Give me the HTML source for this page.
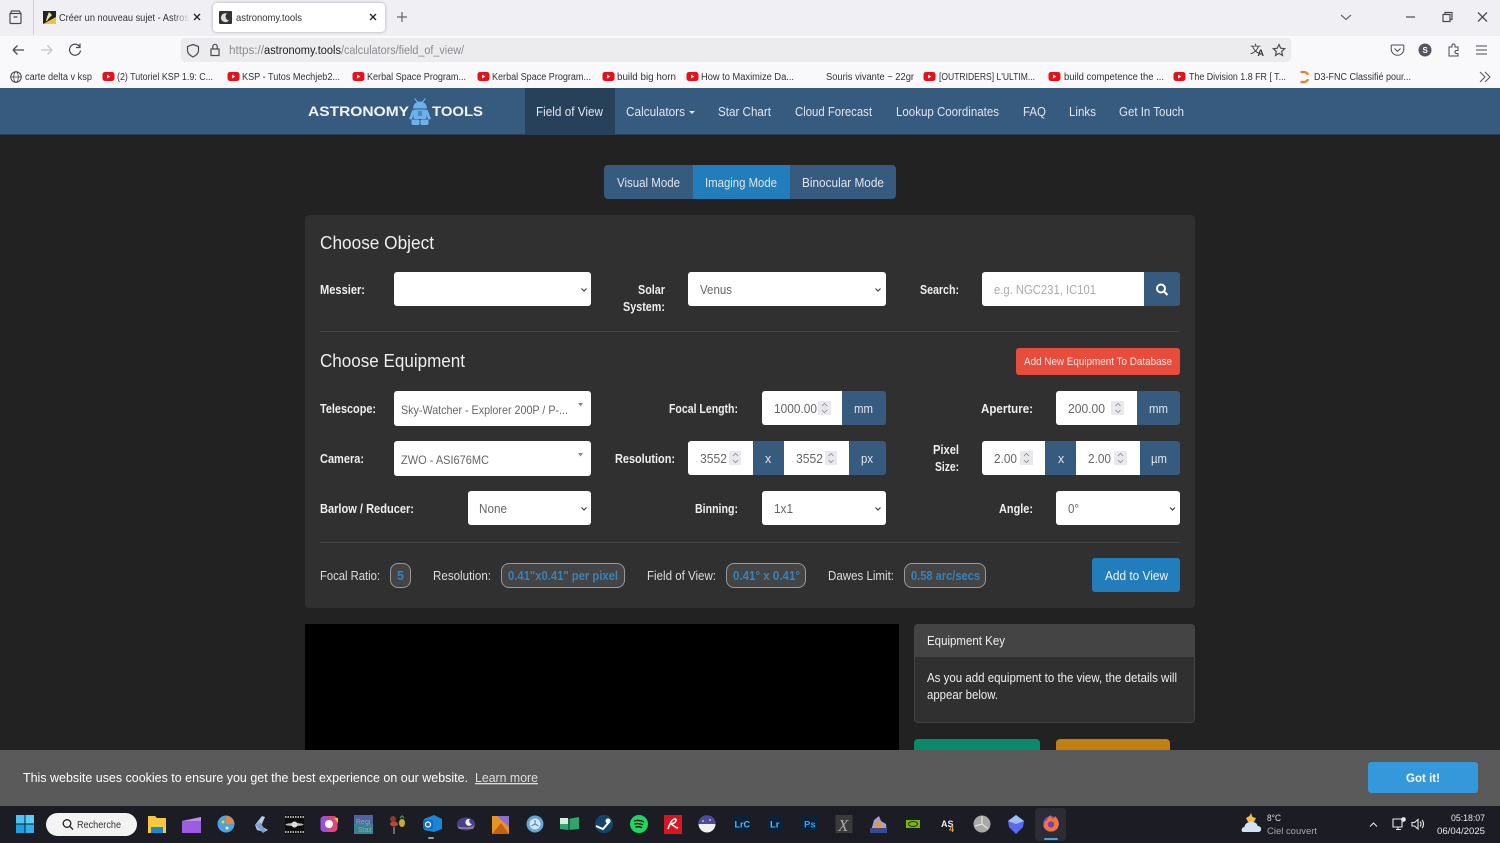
<!DOCTYPE html>
<html lang="fr"><head><meta charset="utf-8"><title>astronomy.tools</title>
<style>
html,body{margin:0;padding:0;width:1500px;height:843px;overflow:hidden;background:#222}
.b{position:absolute;box-sizing:border-box}
svg{position:absolute;left:0;top:0}
text{font-family:"Liberation Sans",sans-serif;white-space:pre}
.c text{fill:#333;font-size:10px}
.n text{fill:#dfe6ee;font-size:13px}
.l text{fill:#eee;font-size:12.5px;font-weight:700}
.r text{fill:#ddd;font-size:12.5px}
.w text{fill:#666;font-size:12.5px}
.e text{fill:#eee;font-size:12.5px}
.v text{fill:#3682bd;font-size:12.5px;font-weight:700}
</style></head><body>
<!-- browser chrome -->
<div class="b" style="left:0;top:0;width:1500px;height:36px;background:#f0f0f4"></div>
<div class="b" style="left:33px;top:0;width:1px;height:35px;background:#d0d0d4"></div>
<div class="b" style="left:213px;top:3px;width:172px;height:29px;background:#fff;border-radius:4px;box-shadow:0 0 3px rgba(0,0,0,.3)"></div>
<div class="b" style="left:0;top:36px;width:1500px;height:52px;background:#f9f9fb"></div>
<div class="b" style="left:181px;top:38px;width:1110px;height:24px;background:#ececee;border-radius:4px"></div>
<!-- nav -->
<div class="b" style="left:0;top:88px;width:1500px;height:47px;background:#375a7f;border-bottom:1px solid #2a3f55"></div>
<div class="b" style="left:525px;top:88px;width:90px;height:47px;background:#28415b"></div>
<!-- mode buttons -->
<div class="b" style="left:604px;top:165px;width:292px;height:34px;background:#375a7f;border-radius:4px"></div>
<div class="b" style="left:693px;top:165px;width:97px;height:34px;background:#217dbb"></div>
<!-- main card -->
<div class="b" style="left:305px;top:215px;width:890px;height:393px;background:#303030;border-radius:4px"></div>
<div class="b" style="left:320px;top:331px;width:860px;height:1px;background:#444"></div>
<div class="b" style="left:320px;top:542px;width:860px;height:1px;background:#444"></div>
<!-- controls -->
<div class="b" style="left:394px;top:272px;width:197px;height:34px;background:#fff;border-radius:3px"></div>
<div class="b" style="left:688px;top:272px;width:198px;height:34px;background:#fff;border-radius:3px"></div>
<div class="b" style="left:982px;top:272px;width:198px;height:34px;background:#375a7f;border-radius:3px"></div>
<div class="b" style="left:982px;top:272px;width:162px;height:34px;background:#fff;border-radius:3px 0 0 3px"></div>
<div class="b" style="left:1016px;top:348px;width:164px;height:27px;background:#e74c3c;border-radius:3px"></div>
<div class="b" style="left:394px;top:391px;width:197px;height:35px;background:#fff;border-radius:3px"></div>
<div class="b" style="left:762px;top:391px;width:124px;height:34px;background:#375a7f;border-radius:3px"></div>
<div class="b" style="left:762px;top:391px;width:80px;height:34px;background:#fff;border-radius:3px 0 0 3px"></div>
<div class="b" style="left:1056px;top:391px;width:124px;height:34px;background:#375a7f;border-radius:3px"></div>
<div class="b" style="left:1056px;top:391px;width:81px;height:34px;background:#fff;border-radius:3px 0 0 3px"></div>
<div class="b" style="left:394px;top:441px;width:197px;height:35px;background:#fff;border-radius:3px"></div>
<div class="b" style="left:688px;top:441px;width:198px;height:34px;background:#375a7f;border-radius:3px"></div>
<div class="b" style="left:688px;top:441px;width:65px;height:34px;background:#fff;border-radius:3px 0 0 3px"></div>
<div class="b" style="left:784px;top:441px;width:65px;height:34px;background:#fff"></div>
<div class="b" style="left:982px;top:441px;width:198px;height:34px;background:#375a7f;border-radius:3px"></div>
<div class="b" style="left:982px;top:441px;width:63px;height:34px;background:#fff;border-radius:3px 0 0 3px"></div>
<div class="b" style="left:1076px;top:441px;width:64px;height:34px;background:#fff"></div>
<div class="b" style="left:468px;top:491px;width:123px;height:34px;background:#fff;border-radius:3px"></div>
<div class="b" style="left:762px;top:491px;width:124px;height:34px;background:#fff;border-radius:3px"></div>
<div class="b" style="left:1056px;top:491px;width:124px;height:34px;background:#fff;border-radius:3px"></div>
<!-- spinners -->
<div class="b" style="left:818px;top:401px;width:13px;height:14px;background:#e9e9ed"></div>
<div class="b" style="left:1111px;top:401px;width:13px;height:14px;background:#e9e9ed"></div>
<div class="b" style="left:729px;top:451px;width:12px;height:14px;background:#e9e9ed"></div>
<div class="b" style="left:825px;top:451px;width:12px;height:14px;background:#e9e9ed"></div>
<div class="b" style="left:1020px;top:451px;width:13px;height:14px;background:#e9e9ed"></div>
<div class="b" style="left:1114px;top:451px;width:13px;height:14px;background:#e9e9ed"></div>
<!-- badges -->
<div class="b" style="left:390px;top:563px;width:21px;height:25px;background:#444;border:1px solid #999;border-radius:8px"></div>
<div class="b" style="left:501px;top:563px;width:124px;height:25px;background:#444;border:1px solid #999;border-radius:8px"></div>
<div class="b" style="left:726px;top:563px;width:80px;height:25px;background:#444;border:1px solid #999;border-radius:8px"></div>
<div class="b" style="left:904px;top:563px;width:82px;height:25px;background:#444;border:1px solid #999;border-radius:8px"></div>
<div class="b" style="left:1092px;top:558px;width:88px;height:34px;background:#217dbb;border-radius:3px"></div>
<!-- lower area -->
<div class="b" style="left:305px;top:624px;width:594px;height:126px;background:#000"></div>
<div class="b" style="left:914px;top:624px;width:281px;height:99px;background:#303030;border:1px solid #444;border-radius:4px"></div>
<div class="b" style="left:914px;top:624px;width:281px;height:33px;background:#444;border-radius:4px 4px 0 0"></div>
<div class="b" style="left:914px;top:739px;width:126px;height:20px;background:#0b8a6a;border-radius:4px"></div>
<div class="b" style="left:1056px;top:739px;width:114px;height:20px;background:#c27f12;border-radius:4px"></div>
<!-- cookie bar -->
<div class="b" style="left:0;top:750px;width:1500px;height:56px;background:#5a5a5a"></div>
<div class="b" style="left:1368px;top:762px;width:110px;height:31px;background:#3498db;border-radius:3px"></div>
<!-- taskbar -->
<div class="b" style="left:0;top:806px;width:1500px;height:37px;background:#1c1d24"></div>
<div class="b" style="left:46px;top:813px;width:91px;height:23px;background:#f3f3f3;border-radius:12px"></div>
<div class="b" style="left:1035px;top:808px;width:31px;height:33px;background:#2c2d34;border-radius:4px"></div>
<div class="b" style="left:1044px;top:838px;width:14px;height:2px;background:#4aa3e0;border-radius:1px"></div>
<div class="b" style="left:428px;top:837px;width:6px;height:2px;background:#999;border-radius:1px"></div>

<svg width="1500" height="843" viewBox="0 0 1500 843">
<!-- chrome text -->
<g class="c">
<text x="59" y="21" textLength="130" lengthAdjust="spacingAndGlyphs" style="font-size:10.5px">Créer un nouveau sujet - Astros</text>
<text x="236" y="21" textLength="66" lengthAdjust="spacingAndGlyphs" style="font-size:10.5px">astronomy.tools</text>
<text x="229" y="54" textLength="35" lengthAdjust="spacingAndGlyphs" style="font-size:11.5px;fill:#8a8a90">https://</text>
<text x="264" y="54" textLength="77" lengthAdjust="spacingAndGlyphs" style="font-size:11.5px;fill:#222">astronomy.tools</text>
<text x="341" y="54" textLength="123" lengthAdjust="spacingAndGlyphs" style="font-size:11.5px;fill:#8a8a90">/calculators/field_of_view/</text>
<text x="25" y="80" textLength="67" lengthAdjust="spacingAndGlyphs">carte delta v ksp</text>
<text x="117" y="80" textLength="96" lengthAdjust="spacingAndGlyphs">(2) Tutoriel KSP 1.9: C...</text>
<text x="242" y="80" textLength="98" lengthAdjust="spacingAndGlyphs">KSP - Tutos Mechjeb2...</text>
<text x="367" y="80" textLength="99" lengthAdjust="spacingAndGlyphs">Kerbal Space Program...</text>
<text x="492" y="80" textLength="99" lengthAdjust="spacingAndGlyphs">Kerbal Space Program...</text>
<text x="617" y="80" textLength="59" lengthAdjust="spacingAndGlyphs">build big horn</text>
<text x="701" y="80" textLength="93" lengthAdjust="spacingAndGlyphs">How to Maximize Da...</text>
<text x="826" y="80" textLength="88" lengthAdjust="spacingAndGlyphs">Souris vivante ~ 22gr</text>
<text x="939" y="80" textLength="96" lengthAdjust="spacingAndGlyphs">[OUTRIDERS] L'ULTIM...</text>
<text x="1064" y="80" textLength="100" lengthAdjust="spacingAndGlyphs">build competence the ...</text>
<text x="1189" y="80" textLength="97" lengthAdjust="spacingAndGlyphs">The Division 1.8 FR [ T...</text>
<text x="1314" y="80" textLength="97" lengthAdjust="spacingAndGlyphs">D3-FNC Classifié pour...</text>
</g>
<!-- tab fade -->
<defs><linearGradient id="fd"><stop offset="0" stop-color="#f0f0f4" stop-opacity="0"/><stop offset="1" stop-color="#f0f0f4"/></linearGradient></defs>
<rect x="172" y="10" width="18" height="15" fill="url(#fd)"/>
<!-- chrome icons -->
<g fill="none" stroke="#4a4a50" stroke-width="1.2">
<path d="M10 13.500h11v9a1 1 0 0 1-1 1h-9a1 1 0 0 1-1-1zM10.500 13.500l1-2.500h8l1 2.500M13.500 17h4"/>
<path d="M194 14l6 6M200 14l-6 6" stroke="#222" stroke-width="1.300"/>
<path d="M370 14l6 6M376 14l-6 6" stroke="#222" stroke-width="1.300"/>
<path d="M402 12v10M397 17h10" stroke="#666"/>
<path d="M1341 15l5 4.500 5-4.500" stroke="#666"/>
<path d="M1406 17h9"/>
<path d="M1443 14.500h7v7h-7zM1445 14.500v-2h7v7h-2" />
<path d="M1478 12.500l9 9M1487 12.500l-9 9" stroke-width="1.300"/>
<path d="M24 50H13M13 50l4.500-4.500M13 50l4.500 4.500" stroke-width="1.300"/>
<path d="M52 50H41M52 50l-4.500-4.500M52 50l-4.500 4.500" stroke="#c4c4c8" stroke-width="1.300"/>
<path d="M79.500 46.500a5.500 5.500 0 1 0 1 4M80 43.500v4h-4" stroke-width="1.200"/>
<path d="M193 44.500l5.500 2v4c0 3-2.500 5-5.500 6.500-3-1.500-5.500-3.500-5.500-6.500v-4z"/>
<path d="M211 49h8v6.500h-8zM212.800 49v-2.500a2.200 2.200 0 0 1 4.400 0V49" stroke-width="1.200"/>
<path d="M1279 44.500l1.700 3.700 4 .5-3 2.700.8 4-3.500-2-3.500 2 .8-4-3-2.700 4-.5z"/>
<path d="M1392 45h11a.8.800 0 0 1 .8.800v3.200a6.200 6.200 0 0 1-12.600 0v-3.200a.8.800 0 0 1 .8-.8zM1394.500 48.500l3 2.800 3-2.800" stroke-width="1"/>
<path d="M1449 47h3v-1.500a1.500 1.500 0 0 1 3 0V47h3v3.500h-1.500a1.500 1.500 0 0 0 0 3H1458V56h-9z" stroke-width="1"/>
<path d="M1476 46h11M1476 50h11M1476 54h11" stroke-width="1"/>
<path d="M1480 72l5 5-5 5M1485 72l5 5-5 5" stroke="#555" stroke-width="1"/>
</g>
<text x="1250" y="53" style="font-size:11px;fill:#333;font-family:'Noto Sans CJK SC',sans-serif">文</text>
<text x="1257.500" y="56" style="font-size:9px;fill:#333;font-weight:700">A</text>
<circle cx="1425" cy="50" r="6.500" fill="#55555f"/><text x="1422.500" y="53" style="font-size:8px;fill:#fff;font-weight:700">S</text>
<!-- favicons -->
<rect x="43" y="11" width="13" height="13" fill="#222"/><path d="M43 24l13-7v7z" fill="#e4c64a"/><path d="M49 12l3 3-3 3-2 3h-1l1-4z" fill="#f0e6a0"/>
<rect x="219" y="11" width="13" height="13" rx="1" fill="#333"/><path d="M227 13.500a4.500 4.500 0 1 0 2 7 4 4 0 0 1-2-7z" fill="#ddd"/>
<circle cx="16" cy="77" r="5.300" fill="none" stroke="#444"/><ellipse cx="16" cy="77" rx="2.300" ry="5.300" fill="none" stroke="#444" stroke-width=".8"/><path d="M10.700 77h10.600" stroke="#444" stroke-width=".8"/>
<g id="yt"><rect x="102.500" y="72" width="12" height="9" rx="2.500" fill="#e8101a"/><path d="M107 74.500l3.200 2-3.200 2z" fill="#fff"/></g>
<use href="#yt" x="125"/><use href="#yt" x="250"/><use href="#yt" x="375"/><use href="#yt" x="500"/><use href="#yt" x="584"/><use href="#yt" x="821"/><use href="#yt" x="946"/><use href="#yt" x="1071"/>
<path d="M1300.500 72h3c2.500 0 4 1 4.500 3M1300.500 82h3c2.500 0 4-1 4.500-3" fill="none" stroke="#e8812a" stroke-width="2.200"/>
<!-- nav -->
<g class="n">
<text x="536" y="116" textLength="67" lengthAdjust="spacingAndGlyphs">Field of View</text>
<text x="626" y="116" textLength="59" lengthAdjust="spacingAndGlyphs">Calculators</text>
<text x="718" y="116" textLength="53" lengthAdjust="spacingAndGlyphs">Star Chart</text>
<text x="795" y="116" textLength="77" lengthAdjust="spacingAndGlyphs">Cloud Forecast</text>
<text x="896" y="116" textLength="103" lengthAdjust="spacingAndGlyphs">Lookup Coordinates</text>
<text x="1023" y="116" textLength="23" lengthAdjust="spacingAndGlyphs">FAQ</text>
<text x="1069" y="116" textLength="27" lengthAdjust="spacingAndGlyphs">Links</text>
<text x="1119" y="116" textLength="65" lengthAdjust="spacingAndGlyphs">Get In Touch</text>
</g>
<path d="M689 111h6l-3 3z" fill="#dfe6ee"/>
<text x="308" y="116" textLength="101" lengthAdjust="spacingAndGlyphs" style="font-size:13.500px;font-weight:700;fill:#f2f5f8">ASTRONOMY</text>
<text x="432" y="116" textLength="51" lengthAdjust="spacingAndGlyphs" style="font-size:13.500px;font-weight:700;fill:#f2f5f8">TOOLS</text>
<!-- robot logo -->
<g fill="#6cb1ea">
<path d="M414.500 98.500l3.500 4M425.500 98.500l-3.500 4" stroke="#6cb1ea" stroke-width="1.200" fill="none"/>
<path d="M413 108.500c0-4 3-7 7-7s7 3 7 7z"/>
<rect x="413.500" y="109.500" width="13" height="9.500" rx="1"/>
<path d="M412.500 109.500l-3.500 9.500 2.800.8 2.700-7.800zM427.500 109.500l3.500 9.500-2.800.8-2.700-7.800z"/>
<rect x="411.500" y="119.500" width="8" height="5.500" rx="1.500"/><rect x="420.500" y="119.500" width="8" height="5.500" rx="1.500"/>
</g>
<rect x="418" y="111" width="4" height="5" fill="#4d89bf"/>
<!-- mode text -->
<g class="n">
<text x="617" y="187" textLength="63" lengthAdjust="spacingAndGlyphs">Visual Mode</text>
<text x="705" y="187" textLength="72" lengthAdjust="spacingAndGlyphs">Imaging Mode</text>
<text x="802" y="187" textLength="82" lengthAdjust="spacingAndGlyphs">Binocular Mode</text>
</g>
<!-- headings -->
<text x="320" y="249" textLength="114" lengthAdjust="spacingAndGlyphs" style="font-size:18px;fill:#eee">Choose Object</text>
<text x="320" y="367" textLength="145" lengthAdjust="spacingAndGlyphs" style="font-size:18px;fill:#eee">Choose Equipment</text>
<!-- labels -->
<g class="l">
<text x="320" y="294" textLength="45" lengthAdjust="spacingAndGlyphs">Messier:</text>
<text x="638" y="294" textLength="27" lengthAdjust="spacingAndGlyphs">Solar</text>
<text x="623" y="311" textLength="42" lengthAdjust="spacingAndGlyphs">System:</text>
<text x="920" y="294" textLength="39" lengthAdjust="spacingAndGlyphs">Search:</text>
<text x="320" y="413" textLength="56" lengthAdjust="spacingAndGlyphs">Telescope:</text>
<text x="669" y="413" textLength="69" lengthAdjust="spacingAndGlyphs">Focal Length:</text>
<text x="981" y="413" textLength="52" lengthAdjust="spacingAndGlyphs">Aperture:</text>
<text x="320" y="463" textLength="44" lengthAdjust="spacingAndGlyphs">Camera:</text>
<text x="615" y="463" textLength="60" lengthAdjust="spacingAndGlyphs">Resolution:</text>
<text x="933" y="454" textLength="26" lengthAdjust="spacingAndGlyphs">Pixel</text>
<text x="935" y="471" textLength="24" lengthAdjust="spacingAndGlyphs">Size:</text>
<text x="320" y="513" textLength="94" lengthAdjust="spacingAndGlyphs">Barlow / Reducer:</text>
<text x="695" y="513" textLength="43" lengthAdjust="spacingAndGlyphs">Binning:</text>
<text x="999" y="513" textLength="34" lengthAdjust="spacingAndGlyphs">Angle:</text>
</g>
<!-- values -->
<g class="w">
<text x="700" y="294" textLength="32" lengthAdjust="spacingAndGlyphs">Venus</text>
<text x="994" y="294" textLength="102" lengthAdjust="spacingAndGlyphs" style="fill:#aaa">e.g. NGC231, IC101</text>
<text x="401" y="414" textLength="167" lengthAdjust="spacingAndGlyphs" style="font-size:12px">Sky-Watcher - Explorer 200P / P-...</text>
<text x="774" y="413" textLength="43" lengthAdjust="spacingAndGlyphs">1000.00</text>
<text x="1068" y="413" textLength="37" lengthAdjust="spacingAndGlyphs">200.00</text>
<text x="401" y="464" textLength="88" lengthAdjust="spacingAndGlyphs" style="font-size:12px">ZWO - ASI676MC</text>
<text x="700" y="463" textLength="27" lengthAdjust="spacingAndGlyphs">3552</text>
<text x="796" y="463" textLength="27" lengthAdjust="spacingAndGlyphs">3552</text>
<text x="994" y="463" textLength="23" lengthAdjust="spacingAndGlyphs">2.00</text>
<text x="1088" y="463" textLength="23" lengthAdjust="spacingAndGlyphs">2.00</text>
<text x="479" y="513" textLength="28" lengthAdjust="spacingAndGlyphs">None</text>
<text x="774" y="513" textLength="19" lengthAdjust="spacingAndGlyphs">1x1</text>
<text x="1068" y="513" textLength="11" lengthAdjust="spacingAndGlyphs">0°</text>
</g>
<g class="n" >
<text x="854" y="413" textLength="19" lengthAdjust="spacingAndGlyphs" style="font-size:12.500px">mm</text>
<text x="1149" y="413" textLength="19" lengthAdjust="spacingAndGlyphs" style="font-size:12.500px">mm</text>
<text x="765" y="463" style="font-size:12.500px">x</text>
<text x="861" y="463" textLength="12" lengthAdjust="spacingAndGlyphs" style="font-size:12.500px">px</text>
<text x="1058" y="463" style="font-size:12.500px">x</text>
<text x="1151" y="463" textLength="16" lengthAdjust="spacingAndGlyphs" style="font-size:12.500px">µm</text>
<text x="1024" y="365" textLength="148" lengthAdjust="spacingAndGlyphs" style="font-size:11px;fill:#fbe6e4">Add New Equipment To Database</text>
<text x="1105" y="580" textLength="63" lengthAdjust="spacingAndGlyphs" style="font-size:12.500px;fill:#f0f4f8">Add to View</text>
</g>
<!-- results -->
<g class="r">
<text x="320" y="580" textLength="60" lengthAdjust="spacingAndGlyphs">Focal Ratio:</text>
<text x="433" y="580" textLength="58" lengthAdjust="spacingAndGlyphs">Resolution:</text>
<text x="647" y="580" textLength="69" lengthAdjust="spacingAndGlyphs">Field of View:</text>
<text x="828" y="580" textLength="66" lengthAdjust="spacingAndGlyphs">Dawes Limit:</text>
</g>
<g class="v">
<text x="397" y="580" style="font-weight:700">5</text>
<text x="508" y="580" textLength="110" lengthAdjust="spacingAndGlyphs">0.41"x0.41" per pixel</text>
<text x="733" y="580" textLength="67" lengthAdjust="spacingAndGlyphs">0.41° x 0.41°</text>
<text x="911" y="580" textLength="69" lengthAdjust="spacingAndGlyphs">0.58 arc/secs</text>
</g>
<!-- equipment key -->
<g class="e">
<text x="927" y="645" textLength="78" lengthAdjust="spacingAndGlyphs">Equipment Key</text>
<text x="927" y="682" textLength="250" lengthAdjust="spacingAndGlyphs">As you add equipment to the view, the details will</text>
<text x="927" y="699" textLength="71" lengthAdjust="spacingAndGlyphs">appear below.</text>
</g>
<!-- select chevrons -->
<g fill="none" stroke="#444" stroke-width="1.200">
<path d="M581.500 288.500l2.500 2.500 2.500-2.500M875.500 288.500l2.500 2.500 2.500-2.500M581.500 507.500l2.500 2.500 2.500-2.500M875.500 507.500l2.500 2.500 2.500-2.500M1170 507.500l2.500 2.500 2.500-2.500"/>
</g>
<path d="M578 403h5l-2.500 3.500zM578 453h5l-2.500 3.500z" fill="#888"/>
<!-- spinner arrows -->
<g fill="none" stroke="#888" stroke-width=".8">
<path id="sp" d="M822 406l2.500-2.500 2.500 2.500M822 410l2.500 2.500 2.500-2.500"/>
<use href="#sp" x="293.500"/>
<use href="#sp" x="-89" y="50"/><use href="#sp" x="6.500" y="50"/><use href="#sp" x="202" y="50"/><use href="#sp" x="296" y="50"/>
</g>
<!-- search icon -->
<g fill="none" stroke="#fff" stroke-width="2"><circle cx="1161" cy="288.500" r="4"/><path d="M1164 291.500l3.500 3.500"/></g>
<!-- cookie -->
<text x="23" y="782" textLength="445" lengthAdjust="spacingAndGlyphs" style="font-size:13px;fill:#fff">This website uses cookies to ensure you get the best experience on our website.</text>
<text x="475" y="782" textLength="63" lengthAdjust="spacingAndGlyphs" text-decoration="underline" style="font-size:13px;fill:#ddd">Learn more</text>
<text x="1406" y="782" textLength="34" lengthAdjust="spacingAndGlyphs" style="font-size:12px;font-weight:700;fill:#f4f8fb">Got it!</text>
<!-- taskbar -->
<g><rect x="16" y="815" width="8.500" height="8.500" fill="#4cc2f1"/><rect x="25.500" y="815" width="8.500" height="8.500" fill="#5ccdf5"/><rect x="16" y="824.500" width="8.500" height="8.500" fill="#1f9ee0"/><rect x="25.500" y="824.500" width="8.500" height="8.500" fill="#2fb0ea"/></g>
<g fill="none" stroke="#222" stroke-width="1.300"><circle cx="67" cy="823.500" r="3.800"/><path d="M70 826.500l3 3"/></g>
<text x="77" y="828" textLength="44" lengthAdjust="spacingAndGlyphs" style="font-size:10px;fill:#333">Recherche</text>
<!-- taskbar apps -->
<path d="M148 816h7l2 2h9v15h-18z" fill="#f6c93f"/><rect x="151" y="827" width="12" height="6" fill="#1f86c9"/>
<path d="M182 821l19-4v4h0v12h-19z" fill="#9b5ee0"/><path d="M182 821l19-4v4h-19z" fill="#c08cf0"/>
<circle cx="226" cy="824" r="8.500" fill="#4da3d8"/><path d="M226 816a8 8 0 0 1 8 8h-8z" fill="#e08a4a"/><circle cx="223" cy="822" r="1.500" fill="#f5d24a"/><circle cx="227" cy="828" r="1.500" fill="#e9e9e9"/>
<path d="M255 825l7-9 3 1-4 9 7 4-4 2-7-2z" fill="#b9cde8"/><path d="M255 825l5-3 6 9-3 2z" fill="#7fa0d2"/>
<rect x="285" y="815" width="19" height="19" fill="#0d0d0d"/><path d="M285 817h19M285 832h19" stroke="#ddd" stroke-width="1.500" stroke-dasharray="1.500 1"/><ellipse cx="294.500" cy="824.500" rx="9" ry="1.500" fill="#bbb"/><circle cx="294.500" cy="824.500" r="3" fill="#ddd"/>
<rect x="320.500" y="816" width="17" height="16" rx="4" fill="#e0457b"/><rect x="320.500" y="816" width="8" height="16" rx="4" fill="#9a4fe0"/><circle cx="329" cy="824" r="4" fill="#fff"/><path d="M334 818l4 0v5z" fill="#f5b23a"/>
<rect x="354" y="815" width="19" height="19" fill="#3f7f8e"/><rect x="354" y="815" width="19" height="9" fill="#50619c"/><text x="356" y="824" style="font-size:7px;fill:#7fb0c8">Regi</text><text x="358" y="832" style="font-size:7px;fill:#7fb0a8">Stax</text>
<circle cx="393" cy="819" r="3" fill="#8b3a2a"/><ellipse cx="394" cy="824" rx="4" ry="2.500" fill="#b04a3a"/><path d="M394 827v7" stroke="#bbb"/><ellipse cx="402" cy="823" rx="3" ry="4" fill="#c8a840"/><path d="M400 818l2-2 2 2" stroke="#4a8a3a" fill="none" stroke-width="1.500"/>
<path d="M424 819l10-4 8 4v10l-8 3-10-2z" fill="#1a86d8"/><rect x="423" y="820" width="10" height="9" rx="1.500" fill="#0f6cbd"/><circle cx="428" cy="824.500" r="2.500" fill="none" stroke="#fff" stroke-width="1.200"/>
<ellipse cx="466" cy="824" rx="9" ry="6.500" fill="#4a3f8a"/><path d="M470 819a3.500 3.500 0 1 0 2 5 3 3 0 0 1-2-5z" fill="#eee"/><path d="M457 826c5 2 13 2 18-1l-2 4h-14z" fill="#8a7a9c"/>
<path d="M492 816h17v18h-17z" fill="#e8951e"/><path d="M497 816h12v11z" fill="#8a6ed4"/><path d="M492 834l9-11 8 11z" fill="#c2601a"/>
<circle cx="535" cy="824" r="8.500" fill="#62a5d6"/><circle cx="535" cy="824" r="5.500" fill="#d6e6f2"/><path d="M535 820v4l3.500 2M535 824l-3.500 2" stroke="#4a8abc" stroke-width="1.200" fill="none"/>
<path d="M560 818l8 1 11-2v12l-11 1-8-1z" fill="#2da86a"/><rect x="560" y="818" width="8" height="6" fill="#d6eedd"/><path d="M569 818v15" stroke="#222"/>
<circle cx="604" cy="824" r="9" fill="#11456e"/><path d="M596 826l7 3 7-8" stroke="#fff" stroke-width="2" fill="none"/><circle cx="608" cy="821" r="2.500" fill="#fff"/>
<circle cx="639" cy="824" r="9" fill="#1ed760"/><path d="M634 821c3.500-1 7-.7 10 1M634.500 824c3-.8 6-.5 8.500 1M635.500 827c2.500-.5 5-.3 6.500.800" stroke="#111" stroke-width="1.300" fill="none"/>
<rect x="664" y="815" width="18" height="19" fill="#d8161f"/><path d="M668 829c2-6 4-10 7-10 2 0 1 3-1 4l-3 1 6 4 1-1" stroke="#fff" stroke-width="1.500" fill="none"/>
<circle cx="707" cy="824" r="8.500" fill="#f0f0f0"/><path d="M698.500 824a8.500 8.500 0 0 1 17 0z" fill="#4a4aa0"/><circle cx="703" cy="821" r="1" fill="#bbd"/><circle cx="710" cy="820" r="1" fill="#bbd"/>
<rect x="733" y="816" width="16" height="16" rx="2" fill="#0a2238"/><text x="734.500" y="827.500" style="font-size:9px;font-weight:700;fill:#5ab4f0">LrC</text>
<rect x="767" y="816" width="16" height="16" rx="2" fill="#0a2238"/><text x="770" y="827.500" style="font-size:9.500px;font-weight:700;fill:#5ab4f0">Lr</text>
<rect x="801.500" y="816" width="16" height="16" rx="2" fill="#0a2238"/><text x="804" y="827.500" style="font-size:9.500px;font-weight:700;fill:#35a2f0">Ps</text>
<rect x="835.500" y="815" width="17" height="18" fill="#3a3a3a"/><text x="838" y="831" style="font-size:17px;font-style:italic;fill:#aaa;font-family:'Liberation Serif',serif">X</text>
<path d="M871 831l3-11 5-4 2 5 5 3 1 9h-16z" fill="#a8a0c8"/><rect x="870" y="828" width="17" height="5" fill="#3a4a8a"/><path d="M876 822h5v5h-5z" fill="#d89860"/>
<path d="M906 820h14v8h-14z" fill="#76b900"/><ellipse cx="913" cy="824" rx="4.500" ry="2.500" fill="none" stroke="#223" stroke-width="1"/>
<text x="941" y="827" style="font-size:9px;font-weight:700;fill:#eee">AS</text><text x="949" y="832" style="font-size:9px;font-weight:700;fill:#e0a030">4</text>
<circle cx="982" cy="824" r="8.500" fill="#a8a8a8"/><path d="M982 816v8l6 5M982 824l-7 2" stroke="#eee" fill="none"/>
<path d="M1016 815l8 6-1 6-7 7-7-7-1-6z" fill="#5a6af0"/><path d="M1016 815l8 6-8 3-8-3z" fill="#9fc0f8"/>
<circle cx="1051" cy="824" r="8" fill="#8a3ed0"/><path d="M1044 827a8 8 0 0 0 14 0c2-5-1-9-3-11 0 3-2 3-3 2-2-1-1-3-1-3-3 2-4 4-4 6-2-1-3 2-3 6z" fill="#f2792a"/><circle cx="1051" cy="824.500" r="3.200" fill="#7a3ac8"/>
<!-- weather -->
<path d="M1246 818l3.500-2 1.500-3 1.500 4 3.500 1-2 4h-6z" fill="#f6bc3c"/><path d="M1243 832c-2 0-2-5 1.500-5 0-3 4-6 8-5 3 0 5 2 5 4 3 0 4 2 3.500 4-.2 1.500-1.500 2-3 2z" fill="#cfe3f5"/>
<text x="1267" y="821" textLength="14" lengthAdjust="spacingAndGlyphs" style="font-size:9.500px;fill:#ddd">8°C</text>
<text x="1267" y="834" textLength="50" lengthAdjust="spacingAndGlyphs" style="font-size:9.500px;fill:#a8a8a8">Ciel couvert</text>
<g fill="none" stroke="#e8e8e8" stroke-width="1.100">
<path d="M1370 826.500l3.500-3.500 3.500 3.500"/>
<path d="M1393 819h9v8h-9zM1396 829.500h5M1398 827v2.500"/><circle cx="1403.500" cy="819.500" r="1.800" fill="#e8e8e8"/>
<path d="M1412 822.500h2.500l3.500-3v9.500l-3.500-3H1412zM1420 821.500a3.500 3.500 0 0 1 0 5M1422 820a6 6 0 0 1 0 8"/>
</g>
<text x="1451" y="821" textLength="34" lengthAdjust="spacingAndGlyphs" style="font-size:9.500px;fill:#e8e8e8">05:18:07</text>
<text x="1437" y="834" textLength="48" lengthAdjust="spacingAndGlyphs" style="font-size:9.500px;fill:#e8e8e8">06/04/2025</text>
</svg>
</body></html>
